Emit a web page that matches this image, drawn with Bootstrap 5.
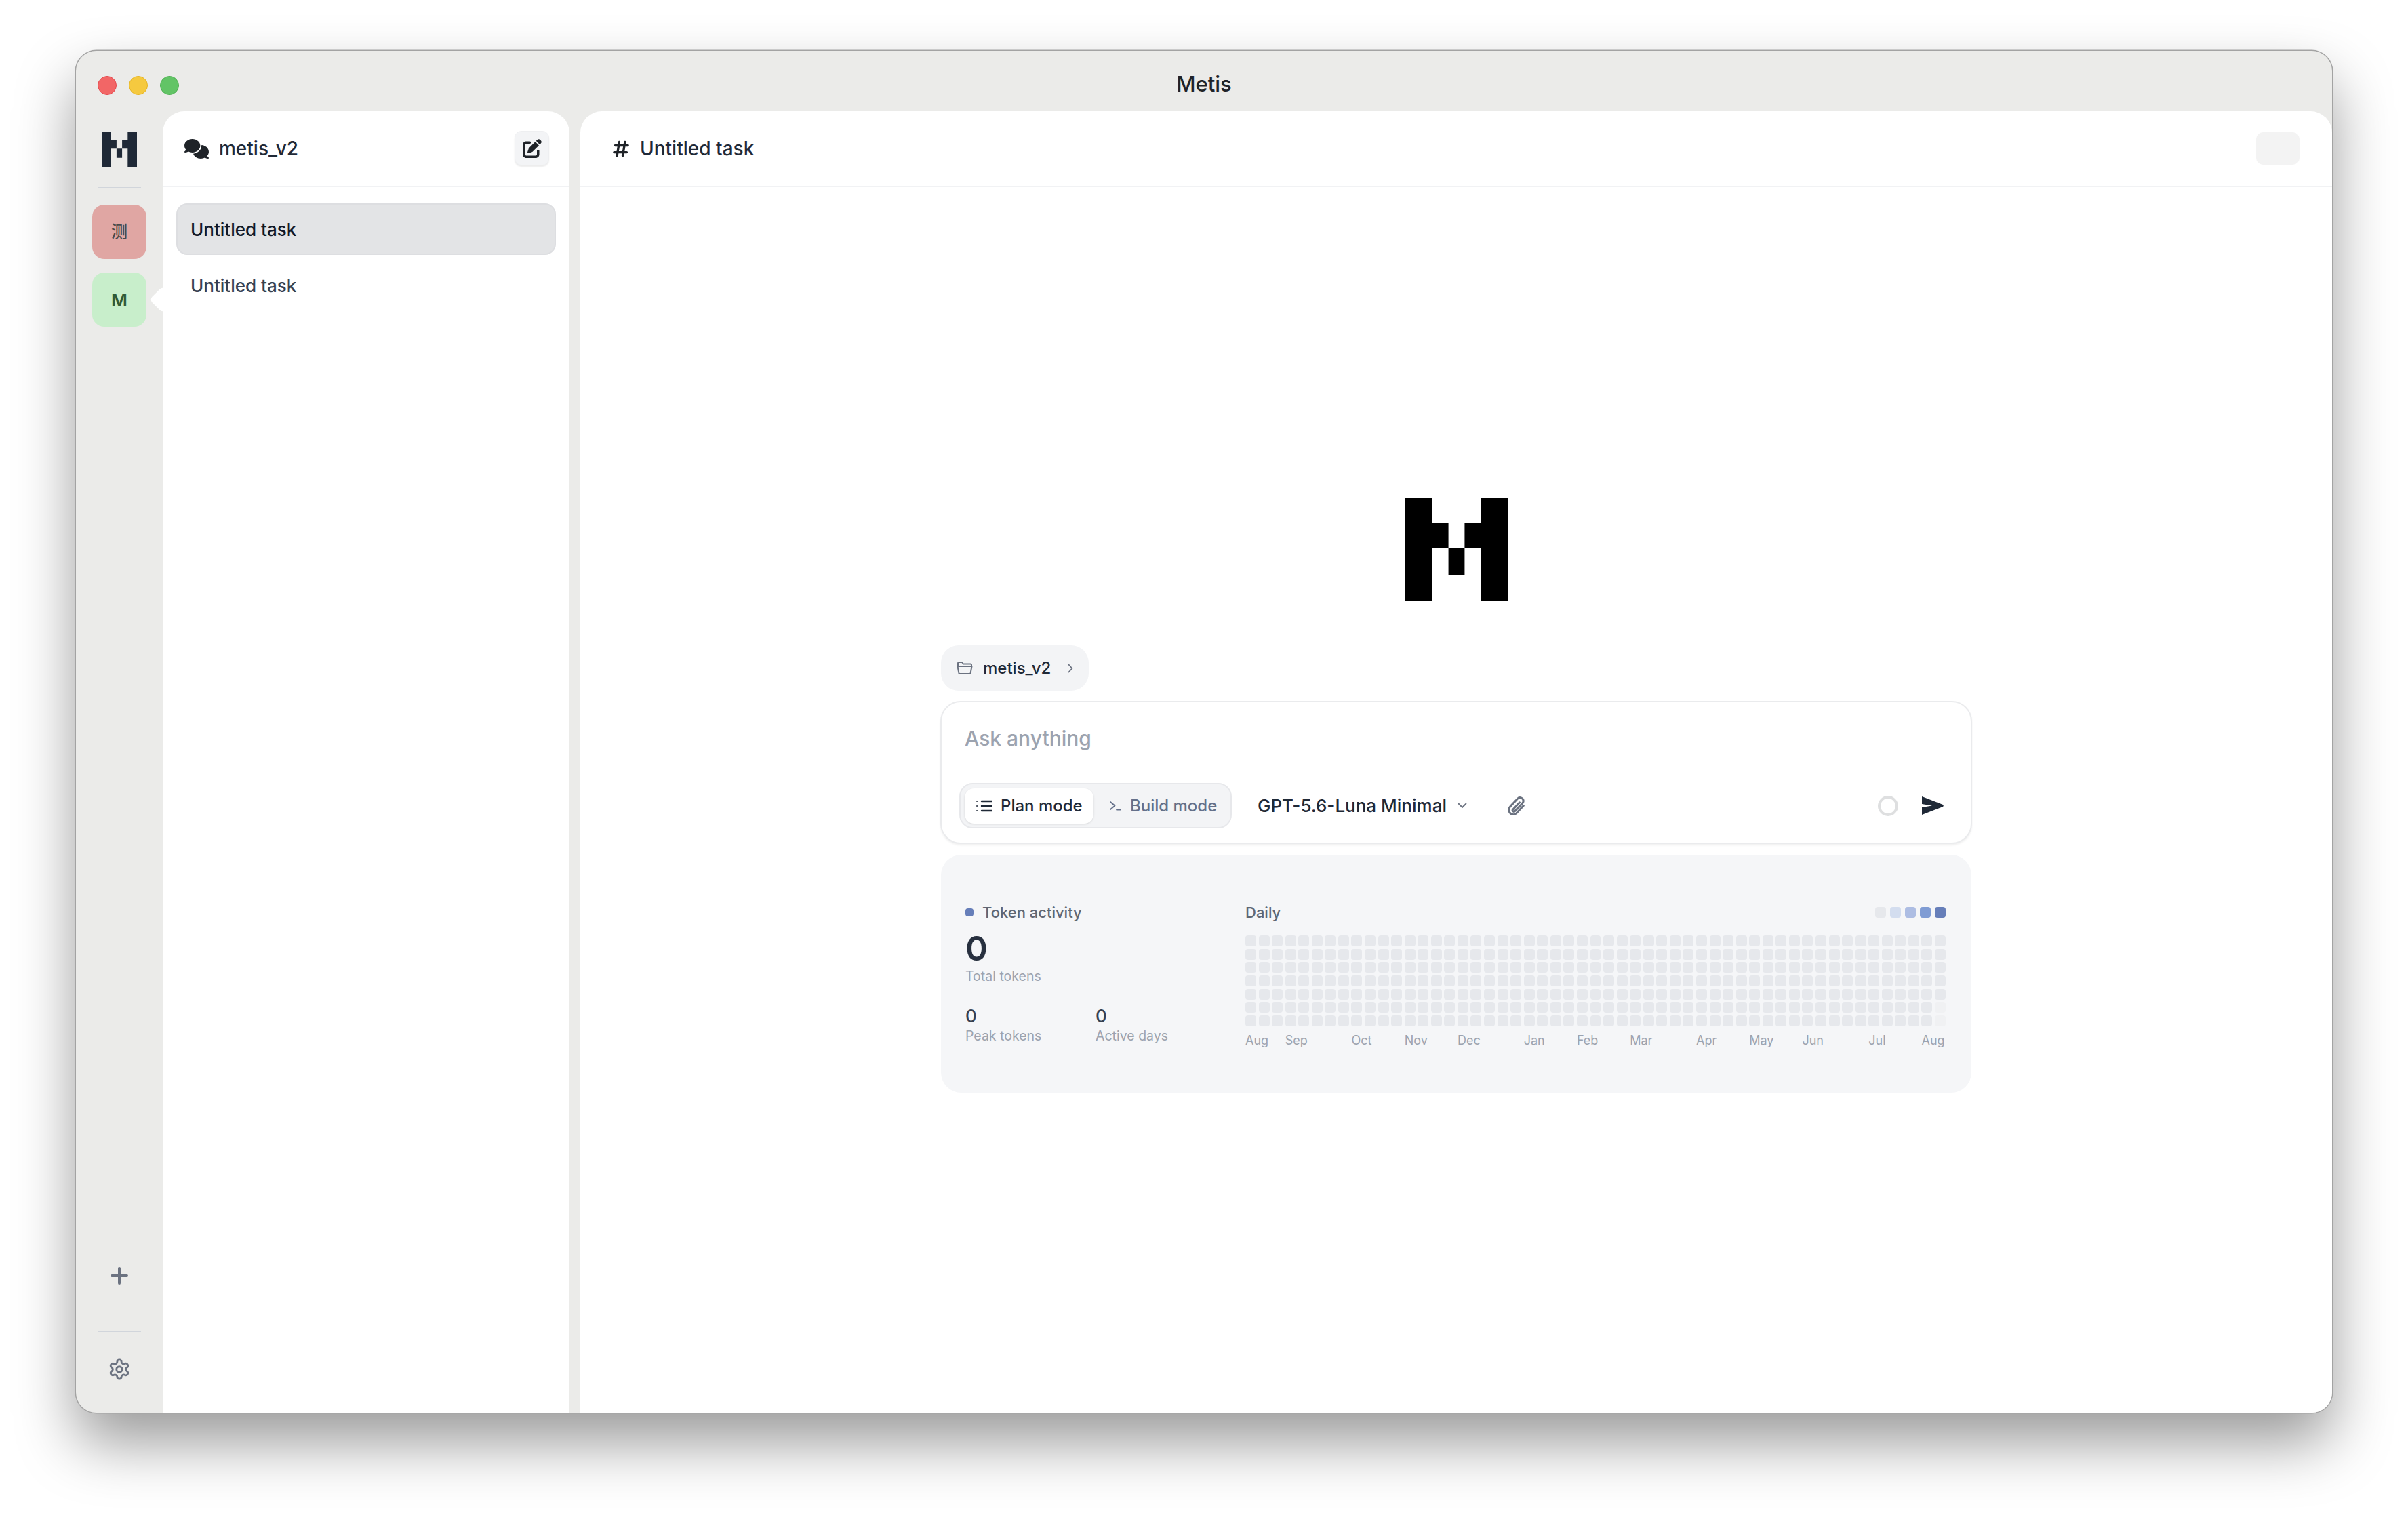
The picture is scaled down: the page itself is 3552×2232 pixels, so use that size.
<!DOCTYPE html>
<html lang="en">
<head>
  <meta charset="UTF-8" />
  <meta name="viewport" content="width=device-width, initial-scale=1.0"/>
  <title>Metis</title>

  <link href="https://cdn.jsdelivr.net/npm/bootstrap@5.3.2/dist/css/bootstrap.min.css" rel="stylesheet">
  <style>
    body { font-family: Inter, "Noto Sans CJK SC", sans-serif; color: #1f2937; background: #fff; }
    .stage { height: 2232px; padding: 75px 112px 148px; }
    .app-window { height: 2009px; border-radius: 30px; background: #ebebe9; box-shadow: 0 0 0 1.5px #a3a3a3, 0 44px 88px rgba(0,0,0,.4); overflow: hidden; }

    /* title bar */
    .titlebar { height: 89px; padding-left: 32px; }
    .light { width: 28px; height: 28px; border-radius: 50%; margin-right: 18px; margin-top: 13px; border: 1px solid; }
    .light-red { background: #f26666; border-color: #e5484d; }
    .light-yellow { background: #f5c93f; border-color: #e6b422; }
    .light-green { background: #62c466; border-color: #4cae50; }
    .app-title { top: 29px; left: 0; right: 0; font-size: 31px; font-weight: 500; line-height: 40px; color: #1f2328; }

    /* server rail */
    .rail { width: 128px; }
    .rail-logo { width: 52px; height: 52px; margin-top: 30px; color: #1f2937; }
    .rail-line { width: 64px; height: 2px; background: #d1d5db; }
    .avatar { width: 80px; height: 80px; border-radius: 18px; font-weight: 600; }
    .avatar-red { background: #e0a6a3; color: #4a4a4a; font-size: 24px; font-weight: 500; }
    .avatar-green { background: #c8eecb; color: #2f5a36; font-size: 26px; }
    .notch { width: 28px; height: 28px; left: 90px; top: 26px; background: #fff; border-radius: 6px; transform: rotate(45deg); }

    /* task list */
    .sidebar { width: 600px; background: #fff; border-radius: 32px 32px 0 0; margin-right: 16px; z-index: 1; }
    .panel-head { height: 112px; border-bottom: 2px solid #f1f2f4; }
    .sidebar .panel-head { padding: 0 30px 0 32px; }
    .head-name { font-size: 28px; font-weight: 450; line-height: 36px; color: #1f2937; }
    .btn-new { width: 51px; height: 51px; padding: 0; background: #f3f4f6; border: 1px solid #eeeff1; border-radius: 10px; box-shadow: 0 2px 2px rgba(0,0,0,.08); margin-top: -1px; }
    .tasks { padding: 24px 20px; gap: 7px; }
    .task-item { height: 76px; padding: 0 19px; border: 2px solid transparent; border-radius: 16px; font-size: 26px; font-weight: 450; color: #374151; background: transparent; }
    .task-item.active { background: #e3e4e6; border-color: #dddee1; color: #111827; font-weight: 500; }

    /* main pane */
    .main-pane { background: #fff; border-radius: 32px 32px 0 0; }
    .main-pane .panel-head { padding: 0 48px; }
    .head-title { font-size: 28px; font-weight: 450; line-height: 36px; color: #1f2937; }
    .head-ghost { width: 64px; height: 48px; background: #f3f3f3; border-radius: 10px; }
    .center-col { width: 1522px; padding-top: 459px; margin: 0 auto; }
    .big-logo { width: 151px; height: 152px; color: #000; margin-bottom: 65px; }

    .folder-pill { width: 218px; height: 67px; margin-left: 1px; padding: 0 0 0 23px; background: #f3f4f6; border-radius: 26px; font-size: 24px; font-weight: 500; color: #1f2937; }
    .composer { height: 211px; margin-top: 15px; border: 2px solid #eaebed; border-radius: 30px; box-shadow: 0 2px 3px rgba(0,0,0,.06); padding: 0 26px 21px; }
    .ask { font-size: 30px; font-weight: 450; line-height: 40px; color: #9ca3af; margin: 33px 8px 0; }
    .mode-group { height: 67px; width: 402px; padding: 0 6px; background: #f3f4f6; border: 2px solid #e7e8eb; border-radius: 20px; font-size: 24px; font-weight: 500; }
    .mode { height: 52px; border-radius: 14px; }
    .mode-plan { width: 190px; background: #fff; color: #1f2937; box-shadow: 0 1px 3px rgba(0,0,0,.12); padding-left: 17px; }
    .mode-build { color: #64708a; padding-left: 24px; }
    .model { margin-left: 38px; font-size: 26px; font-weight: 500; color: #1f2937; }

    .token-card { height: 351px; margin: 16px 0 0 1px; width: 1520px; background: #f5f6f8; border-radius: 30px; padding: 0 38px 0 36px; }
    .token-left { width: 413px; padding-top: 71px; }
    .token-dot { width: 12px; height: 12px; border-radius: 4px; background: #667eb9; margin-right: 13px; }
    .label-strong { font-size: 22px; line-height: 28px; font-weight: 500; color: #5f6774; }
    .big-zero { font-size: 50px; line-height: 50px; font-weight: 600; color: #27303f; margin-top: 14px; }
    .small-zero { font-size: 26px; line-height: 32px; font-weight: 500; color: #374151; }
    .muted-label { font-size: 19.500px; line-height: 26px; color: #9ca3af; }
    .token-right { width: 1033px; padding-top: 71px; }
    .legend-cell { width: 16px; height: 16px; border-radius: 4px; }
    .heat, .months { display: grid; grid-template-columns: repeat(53, 1fr); column-gap: 3.6px; }
    .heat { grid-template-rows: repeat(7, 16px); row-gap: 3.67px; grid-auto-flow: column; margin-top: 20px; }
    .heat-cell { border-radius: 4px; background: #e6e8ec; }
    .heat-cell.future { background: #f0f1f3; }
    .months { margin-top: 10px; font-size: 18px; line-height: 22px; color: #9ca3af; }
    .months span { white-space: nowrap; min-width: 0; }
  </style>
</head>
<body class="m-0">

  <div class="stage">
    <div class="app-window d-flex flex-column">

      <div class="titlebar d-flex align-items-center position-relative flex-shrink-0">
        <span class="light light-red"></span>
        <span class="light light-yellow"></span>
        <span class="light light-green"></span>
        <div class="app-title position-absolute text-center">Metis</div>
      </div>

      <div class="d-flex flex-grow-1" style="min-height:0">
        <!-- rail -->
        <div class="rail d-flex flex-column align-items-center flex-shrink-0">
          <svg class="rail-logo d-block flex-shrink-0" viewBox="0 0 152 152" fill="currentColor"><path d="M0 0h40v37h24v37h24v-37h24v-37h40v152h-40v-78h-24v39h-24v-39h-24v78h-40z"/></svg>
          <div class="rail-line" style="margin-top:30px"></div>
          <div class="avatar avatar-red d-flex align-items-center justify-content-center" style="margin-top:24px">测</div>
          <div class="position-relative" style="margin-top:20px">
            <div class="avatar avatar-green d-flex align-items-center justify-content-center">M</div>
            <div class="notch position-absolute"></div>
          </div>
          <svg class="mt-auto" width="26" height="26" viewBox="0 0 26 26" fill="none" stroke="#6b7280" stroke-width="4" stroke-linecap="round"><path d="M13 2v22M2 13h22"/></svg>
          <div class="rail-line" style="margin-top:68px"></div>
          <svg style="margin:38px 0 47px" width="34" height="34" viewBox="0 0 24 24" fill="none" stroke="#6b7280" stroke-width="2" stroke-linecap="round" stroke-linejoin="round"><path d="M12.220 2h-.44a2 2 0 0 0-2 2v.18a2 2 0 0 1-1 1.730l-.43.25a2 2 0 0 1-2 0l-.15-.08a2 2 0 0 0-2.730.73l-.22.38a2 2 0 0 0 .73 2.730l.15.1a2 2 0 0 1 1 1.720v.51a2 2 0 0 1-1 1.740l-.15.09a2 2 0 0 0-.73 2.730l.22.38a2 2 0 0 0 2.730.73l.15-.08a2 2 0 0 1 2 0l.43.25a2 2 0 0 1 1 1.730V20a2 2 0 0 0 2 2h.44a2 2 0 0 0 2-2v-.18a2 2 0 0 1 1-1.730l.43-.25a2 2 0 0 1 2 0l.15.08a2 2 0 0 0 2.730-.73l.22-.39a2 2 0 0 0-.73-2.730l-.15-.08a2 2 0 0 1-1-1.740v-.5a2 2 0 0 1 1-1.740l.15-.09a2 2 0 0 0 .73-2.730l-.22-.38a2 2 0 0 0-2.730-.73l-.15.08a2 2 0 0 1-2 0l-.43-.25a2 2 0 0 1-1-1.730V4a2 2 0 0 0-2-2z"/><circle cx="12" cy="12" r="3"/></svg>
        </div>

        <!-- task list -->
        <div class="sidebar flex-shrink-0">
          <div class="panel-head d-flex align-items-center justify-content-between">
            <div class="d-flex align-items-center" style="gap:15px">
              <svg width="36" height="29" viewBox="0 0 640 512" fill="#1f2328"><path d="M208 352c114.900 0 208-78.800 208-176S322.900 0 208 0S0 78.800 0 176c0 38.600 14.700 74.300 39.600 103.400c-3.500 9.400-8.700 17.700-14.200 24.700c-4.800 6.200-9.700 11-13.300 14.300c-1.800 1.600-3.300 2.900-4.300 3.700c-.5 .4-.9 .7-1.100 .8l-.2 .2C1 327.200-1.400 334.400 .8 340.900S9.100 352 16 352c21.800 0 43.800-5.600 62.100-12.500c9.200-3.500 17.800-7.400 25.300-11.400C134.100 343.300 169.800 352 208 352zM448 176c0 112.300-99.100 196.900-216.500 207C255.800 457.400 336.400 512 432 512c38.200 0 73.900-8.700 104.700-23.900c7.500 4 16 7.900 25.200 11.400c18.300 6.900 40.300 12.500 62.100 12.500c6.900 0 13.100-4.500 15.200-11.100c2.100-6.600-.2-13.800-5.800-17.900l-.2-.2c-.2-.2-.6-.4-1.100-.8c-1-.8-2.500-2-4.300-3.700c-3.600-3.300-8.500-8.100-13.300-14.300c-5.500-7-10.700-15.400-14.200-24.700c24.900-29 39.600-64.700 39.600-103.400c0-92.800-84.900-168.900-192.600-175.500c.4 5.100 .6 10.300 .6 15.500z"/></svg>
              <span class="head-name">metis_v2</span>
            </div>
            <button class="btn btn-new d-flex align-items-center justify-content-center" type="button">
              <svg width="28" height="28" viewBox="0 0 512 512" fill="#1f2328"><path d="M471.600 21.700c-21.900-21.900-57.300-21.900-79.200 0L362.300 51.700l97.900 97.900 30.100-30.100c21.900-21.900 21.900-57.300 0-79.200L471.600 21.700zm-299.200 220c-6.100 6.100-10.800 13.600-13.500 21.900l-29.600 88.800c-2.900 8.600-.6 18.100 5.800 24.600s15.900 8.700 24.600 5.800l88.800-29.600c8.200-2.700 15.700-7.400 21.900-13.500L437.700 172.300 339.700 74.300 172.400 241.700zM96 64C43 64 0 107 0 160V416c0 53 43 96 96 96H352c53 0 96-43 96-96V320c0-17.700-14.300-32-32-32s-32 14.300-32 32v96c0 17.700-14.300 32-32 32H96c-17.700 0-32-14.300-32-32V160c0-17.700 14.300-32 32-32h96c17.700 0 32-14.300 32-32s-14.300-32-32-32H96z"/></svg>
            </button>
          </div>
          <div class="tasks d-flex flex-column">
            <div class="task-item active d-flex align-items-center">Untitled task</div>
            <div class="task-item d-flex align-items-center">Untitled task</div>
          </div>
        </div>

        <!-- main pane -->
        <div class="main-pane flex-grow-1">
          <div class="panel-head d-flex align-items-center justify-content-between">
            <div class="d-flex align-items-center" style="gap:16px">
              <svg width="24" height="27" viewBox="0 0 448 512" fill="#1f2328"><path d="M181.300 32.400c17.400 2.900 29.200 19.400 26.300 36.800L197.800 128h95.100l11.500-69.300c2.900-17.400 19.400-29.200 36.800-26.300s29.200 19.400 26.300 36.800L357.800 128H416c17.700 0 32 14.300 32 32s-14.300 32-32 32H347.100L325.800 320H384c17.700 0 32 14.300 32 32s-14.300 32-32 32H315.100l-11.500 69.300c-2.900 17.400-19.400 29.200-36.800 26.300s-29.200-19.400-26.300-36.800l9.800-58.700H155.100l-11.500 69.300c-2.900 17.400-19.400 29.200-36.800 26.300s-29.200-19.400-26.300-36.800L90.200 384H32c-17.700 0-32-14.300-32-32s14.300-32 32-32h68.900l21.300-128H64c-17.700 0-32-14.300-32-32s14.300-32 32-32h68.900l11.500-69.300c2.900-17.400 19.400-29.200 36.800-26.300zM187.100 192L165.800 320h95.100l21.300-128H187.100z"/></svg>
              <span class="head-title">Untitled task</span>
            </div>
            <div class="head-ghost"></div>
          </div>

          <div class="center-col">
            <svg class="big-logo d-block mx-auto" viewBox="0 0 152 152" preserveAspectRatio="none" fill="currentColor"><path d="M0 0h40v37h24v37h24v-37h24v-37h40v152h-40v-78h-24v39h-24v-39h-24v78h-40z"/></svg>

            <div class="folder-pill d-flex align-items-center">
              <svg width="24" height="19" viewBox="0 0 24 19" fill="none" stroke="#6b7280" stroke-width="2" stroke-linecap="round" stroke-linejoin="round"><path d="M2 7V2.500A1.500 1.500 0 0 1 3.500 1H8l2 2.500h10.500A1.500 1.500 0 0 1 22 5v2"/><path d="M1.500 7h21l-1.800 9.500a1.500 1.500 0 0 1-1.500 1.500H4.800a1.500 1.500 0 0 1-1.500-1.500z"/></svg>
              <span style="margin-left:15px">metis_v2</span>
              <svg style="margin-left:25px" width="8" height="14" viewBox="0 0 8 14" fill="none" stroke="#6b7280" stroke-width="1.800" stroke-linecap="round" stroke-linejoin="round"><path d="M1.500 1.500 6.500 7l-5 5.500"/></svg>
            </div>

            <div class="composer card d-flex flex-column justify-content-between">
              <div class="ask">Ask anything</div>
              <div class="d-flex align-items-center">
                <div class="mode-group d-flex align-items-center">
                  <div class="mode mode-plan d-flex align-items-center">
                    <svg width="24" height="18" viewBox="0 0 24 18" fill="none" stroke="#1f2937" stroke-width="2.400" stroke-linecap="round"><path d="M8 2h15M8 9h15M8 16h15"/><path stroke-width="1.800" d="M1 2h.1M1 9h.1M1 16h.1"/></svg>
                    <span style="margin-left:12px">Plan mode</span>
                  </div>
                  <div class="mode mode-build d-flex align-items-center">
                    <svg width="17" height="14" viewBox="0 0 17 14" fill="none" stroke="#64708a" stroke-width="1.800" stroke-linecap="round" stroke-linejoin="round"><path d="M1 1 7.500 6.500 1 12M10 12.500h6"/></svg>
                    <span style="margin-left:13px">Build mode</span>
                  </div>
                </div>
                <div class="model">GPT-5.6-Luna Minimal</div>
                <svg style="margin-left:16px" width="14" height="9" viewBox="0 0 14 9" fill="none" stroke="#6b7280" stroke-width="1.800" stroke-linecap="round" stroke-linejoin="round"><path d="M1.500 1.500 7 7l5.500-5.500"/></svg>
                <svg style="margin-left:60px" width="25" height="28" viewBox="0 0 25 28" fill="none" stroke="#6b7280" stroke-width="3" stroke-linecap="round" stroke-linejoin="round"><path d="M23.300 13.500 12.800 24.800C9 28.500 1.800 26.200 1.800 19.500c0-2 .8-3.700 2-4.900L14.500 3.200C18-.5 24 3 23 7.600c-.2 1-.8 1.800-1.500 2.600L10.500 21.600c-2 1.900-4.500-.6-2.700-2.600l9.700-10.200"/></svg>
                <span class="ms-auto d-block" style="width:30px;height:30px;border:4px solid #dedfe0;border-radius:50%"></span>
                <svg style="margin-left:35px;margin-right:14px" width="32" height="27" viewBox="0 0 32 27" fill="#1f2937"><path d="M0 0 31 12q1.500 1.500 0 3L0 27V16l15-2.500L0 11z"/></svg>
              </div>
            </div>

            <div class="token-card d-flex">
              <div class="token-left">
                <div class="d-flex align-items-center"><span class="token-dot"></span><span class="label-strong">Token activity</span></div>
                <div class="big-zero">0</div>
                <div class="muted-label" style="margin-top:3px">Total tokens</div>
                <div class="d-flex" style="margin-top:30px">
                  <div style="width:192px"><div class="small-zero">0</div><div class="muted-label">Peak tokens</div></div>
                  <div><div class="small-zero">0</div><div class="muted-label">Active days</div></div>
                </div>
              </div>
              <div class="token-right">
                <div class="d-flex align-items-center justify-content-between" style="height:28px">
                  <span class="label-strong">Daily</span>
                  <div class="d-flex" style="gap:6px" id="legend"></div>
                </div>
                <div class="heat" id="heat"></div>
                <div class="months" id="months"></div>
              </div>
            </div>
          </div>
        </div>
      </div>
    </div>
  </div>

  <script src="https://cdn.jsdelivr.net/npm/bootstrap@5.3.2/dist/js/bootstrap.bundle.min.js"></script>

  <script>
    document.addEventListener('DOMContentLoaded', () => {
      const legend = document.getElementById('legend');
      ['#e6e8ec', '#d3ddef', '#adbde3', '#7f9cd4', '#667eb9'].forEach(c => {
        const s = document.createElement('span');
        s.className = 'legend-cell d-block';
        s.style.background = c;
        legend.appendChild(s);
      });

      const heat = document.getElementById('heat');
      for (let i = 0; i < 53 * 7; i++) {
        const d = document.createElement('div');
        d.className = 'heat-cell' + (i >= 53 * 7 - 2 ? ' future' : '');
        heat.appendChild(d);
      }

      const months = document.getElementById('months');
      const labels = [['Aug', 0], ['Sep', 3], ['Oct', 8], ['Nov', 12], ['Dec', 16], ['Jan', 21], ['Feb', 25],
        ['Mar', 29], ['Apr', 34], ['May', 38], ['Jun', 42], ['Jul', 47], ['Aug', 51]];
      labels.forEach(([name, col]) => {
        const s = document.createElement('span');
        s.textContent = name;
        s.style.gridColumnStart = col + 1;
        s.style.gridRowStart = 1;
        months.appendChild(s);
      });
    });
  </script>
</body>
</html>
